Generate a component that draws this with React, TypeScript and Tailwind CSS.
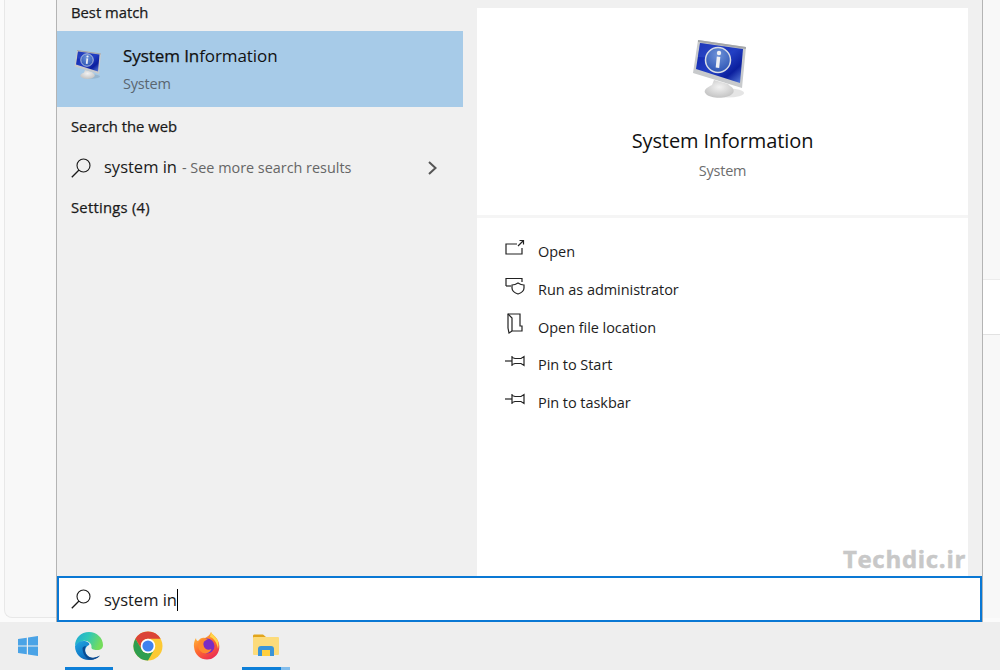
import React from "react";

const font = { fontFamily: '"Open Sans","Noto Sans",sans-serif' };

function Monitor({ size, id }: { size: number; id: string }) {
  return (
    <svg width={size} height={size} viewBox="0 0 64 64" className="block">
      <defs>
        <linearGradient id={id + "s"} x1="0" y1="0" x2="1" y2="1">
          <stop offset="0" stopColor="#0a1fa8" />
          <stop offset="0.5" stopColor="#2340c4" />
          <stop offset="0.75" stopColor="#0b1f9e" />
          <stop offset="1" stopColor="#5f86e0" />
        </linearGradient>
        <radialGradient id={id + "b"} cx="0.5" cy="0.4" r="0.7">
          <stop offset="0" stopColor="#f2f2f2" />
          <stop offset="1" stopColor="#bdbdbd" />
        </radialGradient>
        <radialGradient id={id + "i"} cx="0.5" cy="0.3" r="0.7">
          <stop offset="0" stopColor="#6f93d8" />
          <stop offset="1" stopColor="#2d55b5" />
        </radialGradient>
      </defs>
      <ellipse cx="38" cy="55" rx="16" ry="4.500" fill="#000" opacity="0.1" />
      <path d="M24 42 L38 46 L40 48 C44 50 45 54 42 56 C37 61 21 61 16 56 C12 52 18 49 22 47Z" fill={`url(#${id}b)`} />
      <path d="M8 2 L56 9 L52 50 L3 35 Z" fill="#c8cacc" />
      <path d="M8 2 L56 9 L55.800 11 L8 4Z" fill="#a4a6a8" />
      <path d="M10 5 L53 11 L50 45 L6 31 Z" fill={`url(#${id}s)`} />
      <path d="M10 5 L35 8.500 L25 20 L8 19Z" fill="#4565d8" opacity="0.35" />
      <circle cx="28" cy="22" r="12.500" fill={`url(#${id}i)`} stroke="#d8dde6" strokeWidth="1.500" />
      <path d="M26.800 18.500 L30.300 19 L29.200 30 L25.700 29.500Z" fill="#eef0f4" />
      <circle cx="29" cy="15" r="2.200" fill="#eef0f4" />
    </svg>
  );
}

function SearchIcon() {
  return (
    <svg width="20" height="20" viewBox="0 0 20 20" fill="none" stroke="#1a1a1a" strokeWidth="1.100" className="block">
      <circle cx="12.500" cy="7.500" r="6.500" />
      <path d="M8 12 L0.800 19.200" strokeWidth="1.300" />
    </svg>
  );
}

function OpenIcon() {
  return (
    <svg width="20" height="18" viewBox="0 0 20 18" fill="none" stroke="#222" strokeWidth="1.200" className="block">
      <path d="M12 5 H1 V15 H17 V9" />
      <path d="M13 7 L18 2 M14.500 1.500 H18.500 V5.500" />
    </svg>
  );
}
function AdminIcon() {
  return (
    <svg width="20" height="18" viewBox="0 0 20 18" fill="none" stroke="#222" strokeWidth="1.200" className="block">
      <path d="M1 9 V1.500 H17 V5" />
      <path d="M1 9 H6" />
      <path d="M7 8 C10 8 11.500 7 13 6 C14.500 7 16 8 19 8 V11 C19 14 16 16 13 17 C10 16 7 14 7 11Z" />
    </svg>
  );
}
function FolderIcon() {
  return (
    <svg width="20" height="22" viewBox="0 0 20 22" fill="none" stroke="#222" strokeWidth="1.200" className="block">
      <path d="M3 2 H15 V14 L17 14 V19 H7 L4 21 L3 16 Z" />
      <path d="M3 2 L7 6 V19" />
    </svg>
  );
}
function PinIcon() {
  return (
    <svg width="20" height="12" viewBox="0 0 20 12" fill="none" stroke="#222" strokeWidth="1.200" className="block">
      <path d="M0 6 H7" />
      <path d="M7 1 V11" />
      <path d="M7 2.500 L10 3.500 H16 L19 1.500 V10.500 L16 8.500 H10 L7 9.500" />
    </svg>
  );
}

function WinLogo() {
  return (
    <svg width="20" height="20" viewBox="0 0 20 20" className="block">
      <path d="M0 3 L8.800 1.800 V9.500 H0Z M10 1.600 L20 0 V9.500 H10Z M0 10.600 H8.800 V18.300 L0 17.100Z M10 10.600 H20 V20 L10 18.500Z" fill="#4aa3e6" />
    </svg>
  );
}

function Edge() {
  return (
    <svg width="30" height="30" viewBox="0 0 30 30" className="block">
      <defs>
        <linearGradient id="eg" x1="0" y1="0" x2="0.800" y2="1">
          <stop offset="0" stopColor="#22a9e0" />
          <stop offset="0.600" stopColor="#0f78c8" />
          <stop offset="1" stopColor="#0c4f98" />
        </linearGradient>
        <linearGradient id="eg2" x1="0" y1="0" x2="1" y2="0.300">
          <stop offset="0" stopColor="#1fa6d8" />
          <stop offset="0.500" stopColor="#2fc8b8" />
          <stop offset="1" stopColor="#74dc5c" />
        </linearGradient>
      </defs>
      <path d="M1 15 C1 7 7 1 15 1 C23 1 29 7 29 14 C29 17 27 19 23 19 C19 19 17 18 17.500 16 C18 13 14 9 9 10 C5 11 2 13 1 15Z" fill="url(#eg2)" />
      <path d="M1 15 C3 11 7 9.500 11 10 C15 11 16 13 15 14 C11 16 10 20 13 24 C15.500 27 20 28.500 26 24.500 C23 28 19 29 15 29 C7 29 1 23 1 15Z" fill="url(#eg)" />
      <path d="M8.500 17 C8.500 23 12 28 17 28.800 C20 28.800 24 27 26 24.500 C20 28 14.500 27 12 23 C10.500 20.500 10.500 17 12 15 C10 15 9 16 8.500 17Z" fill="#0b4a90" />
    </svg>
  );
}

function Chrome() {
  return (
    <svg width="30" height="30" viewBox="0 0 30 30" className="block">
      <circle cx="15" cy="15" r="14.500" fill="#fcc934" />
      <path d="M2.400 7.750 A14.500 14.500 0 0 1 27.600 7.750 L15 7.750 A7.250 7.250 0 0 0 8.720 18.600Z" fill="#db4437" />
      <path d="M2.400 7.750 L8.720 18.600 A7.250 7.250 0 0 0 21.280 18.600 L15 29.500 A14.500 14.500 0 0 1 2.400 7.750Z" fill="#2e9e4f" />
      <circle cx="15" cy="15" r="7.250" fill="#fff" />
      <circle cx="15" cy="15" r="5.600" fill="#3f82ee" />
    </svg>
  );
}

function Firefox() {
  return (
    <svg width="28" height="28" viewBox="0 0 28 28" className="block">
      <defs>
        <linearGradient id="ff" x1="0.200" y1="0" x2="0.800" y2="1">
          <stop offset="0" stopColor="#ffc53a" />
          <stop offset="0.500" stopColor="#ff6a2e" />
          <stop offset="1" stopColor="#e8245a" />
        </linearGradient>
      </defs>
      <path d="M18 0 C19 3 23 4 25 9 C28 15 26 24 18 27 C10 29 2 25 1 15 C.5 12 1.500 8 3 6 C3 8 4 9 5 9 C7 6 10 5 12 6 C15 4 17 3 18 0Z" fill="url(#ff)" />
      <path d="M18 0 C19 3 23 4 25 9 C26 12 25.500 15 25 17 C24 11 21 6 17 5Z" fill="#ffd54a" />
      <circle cx="14" cy="14" r="7.500" fill="#7b2cc4" />
      <path d="M6 10 C8 7 12 6 15 7.500 C12 8 10 10 10.500 13 C11 17 15 19 18.500 17 C17 21 12 23 8.500 20 C5 18 4.500 13 6 10Z" fill="#ff8a2e" />
    </svg>
  );
}

function Explorer() {
  return (
    <svg width="26" height="25" viewBox="0 0 26 25" className="block">
      <path d="M0 2 C0 1 .5 .5 1.500 .5 H10 L13 3 V6 H0Z" fill="#e2a51c" />
      <rect x="0" y="3" width="26" height="18" rx="1" fill="#fcdb7a" />
      <path d="M5 22 V15 C5 13 6 12 8 12 H18 C20 12 21 13 21 15 V22Z" fill="#3a94d8" />
      <rect x="9" y="16" width="8" height="6" fill="#ffcf3e" />
    </svg>
  );
}

function Action({ icon, label }: { icon: React.ReactNode; label: string }) {
  return (
    <div className="flex items-center h-[37.750px] pl-[28px]">
      <div className="w-[33px] flex -translate-y-[4px]">{icon}</div>
      <span className="text-[14.500px] text-[#1d1d1d] tracking-[-0.050px]">{label}</span>
    </div>
  );
}

function TaskItem({ children, bar }: { children: React.ReactNode; bar?: React.ReactNode }) {
  return (
    <div className="w-[59px] h-full flex items-center justify-center relative">
      {children}
      {bar}
    </div>
  );
}

const head = "text-[14.800px] text-[#1a1a1a] [-webkit-text-stroke:0.250px_#1a1a1a]";

export default function App() {
  return (
    <div style={font} className="w-[1000px] h-[670px] overflow-hidden flex flex-col bg-[#eeeeee]">
      <div className="flex-1 flex min-h-0 bg-[#fbfbfb]">
        {/* left gutter */}
        <div className="w-[56px] shrink-0 pl-[4px] pb-[4px] flex">
          <div className="flex-1 bg-[#f8f8f8] border-l border-b border-[#e8e8e8] rounded-bl-[8px]" />
        </div>
        {/* start panel */}
        <div className="w-[927px] shrink-0 flex flex-col border-x border-[#b4b4b4]">
          <div className="flex-1 min-h-0 flex bg-[#f0f0f0]">
            <div className="w-[406px] shrink-0 flex flex-col">
              <div className={"h-[31px] pl-[14px] pt-[1px] " + head}>Best match</div>
              <div className="h-[76px] bg-[#a7cbe8] flex pl-[16px]">
                <div className="w-[50px] pt-[18px]"><Monitor size={32} id="a" /></div>
                <div className="flex flex-col">
                  <div className="text-[17px] leading-[24px] pt-[13px] text-[#111] tracking-[-0.080px]">
                    <span className="[-webkit-text-stroke:0.250px_#111]">System In</span>formation
                  </div>
                  <div className="text-[14.500px] leading-[20px] pt-[6px] text-[#5a6670] tracking-[-0.200px]">System</div>
                </div>
              </div>
              <div className={"h-[40px] pl-[14px] pt-[8px] " + head}>Search the web</div>
              <div className="h-[41px] flex items-center pl-[14px] pr-[24px]">
                <SearchIcon />
                <span className="ml-[13px] text-[16.500px] text-[#1a1a1a]">system in</span>
                <span className="ml-[5px] text-[14.400px] text-[#666]">- See more search results</span>
                <svg width="12" height="16" viewBox="0 0 12 16" fill="none" stroke="#555" strokeWidth="2" className="ml-auto"><path d="M2 2 L8.500 8 L2 14" /></svg>
              </div>
              <div className={"pl-[14px] pt-[8px] tracking-[0.250px] " + head}>Settings (4)</div>
            </div>
            <div className="w-[14px] shrink-0" />
            <div className="w-[491px] shrink-0 pt-[8px] flex flex-col">
              <div className="h-[207px] bg-white flex flex-col items-center">
                <div className="mt-[30px] -ml-[1px]"><Monitor size={64} id="b" /></div>
                <div className="mt-[25px] text-[20px] leading-[28px] text-[#111] tracking-[-0.100px]">System Information</div>
                <div className="mt-[6px] text-[14.500px] leading-[20px] text-[#6d6d6d] tracking-[-0.200px]">System</div>
              </div>
              <div className="h-[3px] bg-[#f5f5f5]" />
              <div className="flex-1 bg-white pt-[15px] relative">
                <Action icon={<OpenIcon />} label="Open" />
                <Action icon={<AdminIcon />} label="Run as administrator" />
                <Action icon={<FolderIcon />} label="Open file location" />
                <Action icon={<PinIcon />} label="Pin to Start" />
                <Action icon={<PinIcon />} label="Pin to taskbar" />
                <div className="absolute right-[2px] bottom-[1px] text-[24px] leading-[32px] font-bold text-[#c8c8c8] tracking-[0.700px] [-webkit-text-stroke:0.500px_#c8c8c8]">Techdic.ir</div>
              </div>
            </div>
          </div>
          {/* search */}
          <div className="h-[46px] shrink-0 bg-white border-2 border-[#0a78d4] flex items-center pl-[12px]">
            <SearchIcon />
            <span className="ml-[13px] pt-[2px] text-[16.500px] text-[#1a1a1a]">system in</span>
            <span className="w-px h-[22px] bg-black translate-y-[1px]" />
          </div>
        </div>
        <div className="flex-1 flex flex-col">
          <div className="h-[280px] bg-[#f8f8f8] border-b border-[#ececec]" />
          <div className="h-[54px] bg-white" />
          <div className="flex-1 bg-[#f8f8f8] border-t border-[#e2e2e2] mb-[4px]" />
        </div>
      </div>
      {/* taskbar */}
      <div className="h-[48px] shrink-0 flex items-center bg-[#eeeeee]">
        <div className="w-[59px] flex justify-center pr-[3px]"><WinLogo /></div>
        <TaskItem bar={<div className="absolute bottom-0 left-[6px] right-[5px] h-[3px] bg-[#0d7fd8]" />}><Edge /></TaskItem>
        <TaskItem><Chrome /></TaskItem>
        <TaskItem><Firefox /></TaskItem>
        <TaskItem bar={<div className="absolute bottom-0 left-[6px] right-[5px] h-[3px] flex"><div className="w-[39px] bg-[#0d7fd8]" /><div className="flex-1 bg-[#82bdec]" /></div>}><Explorer /></TaskItem>
      </div>
    </div>
  );
}
